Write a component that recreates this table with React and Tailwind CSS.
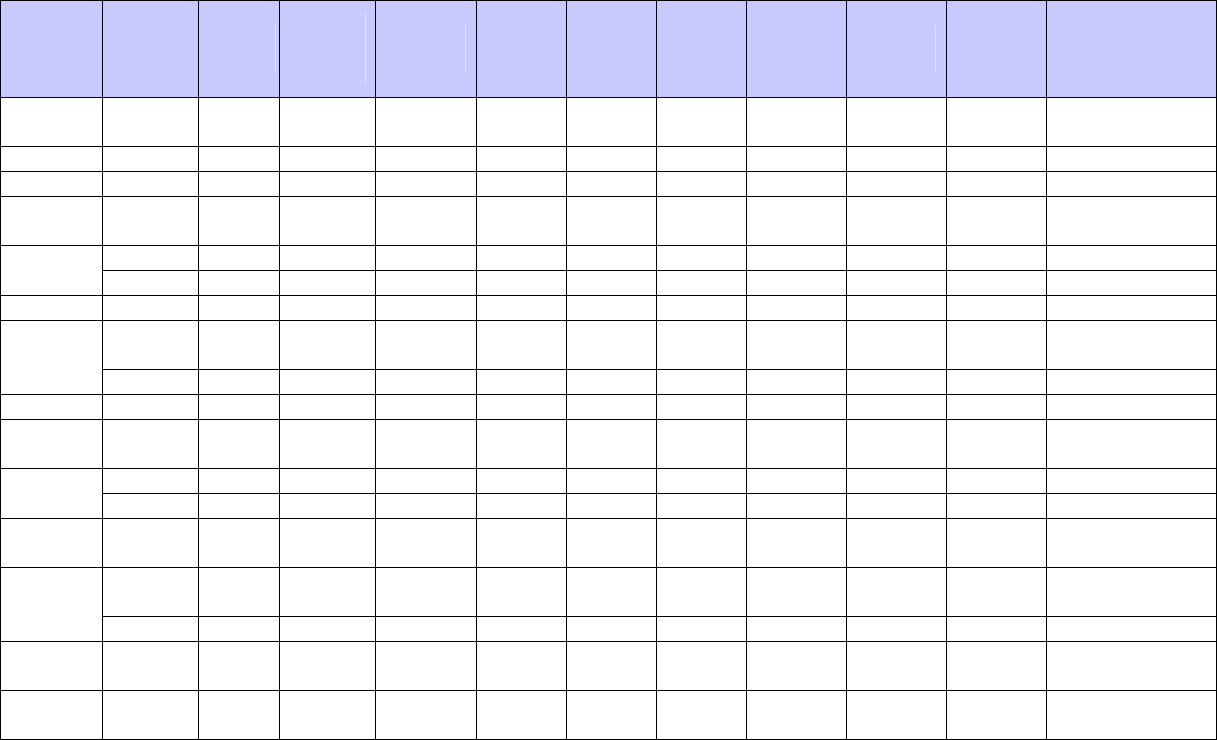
import React from "react";

const COLS = 12;

// first-column cells: span 2 rows where the first column is merged
const rows = [
    { span: 1 },
    { span: 1 },
    { span: 1 },
    { span: 1 },
    { span: 2 },
    { skip: true },
    { span: 1 },
    { span: 2 },
    { skip: true },
    { span: 1 },
    { span: 1 },
    { span: 2 },
    { skip: true },
    { span: 1 },
    { span: 2 },
    { skip: true },
    { span: 1 },
    { span: 1 },
];

// faint marks left in a few header cells
const marks = {
    2: "right-[3px] top-[24px] h-[48px]",
    3: "right-[9px] top-[12px] h-[71px]",
    4: "right-[10px] top-[24px] h-[48px]",
    9: "right-[10px] top-[24px] h-[48px]",
};

function App() {
    const cells = [];

    for (let c = 0; c < COLS; c++) {
        cells.push(
            <div key={"h" + c} className="relative bg-[#c9c9ff] border-r border-b border-black">
                {marks[c] && <div className={"absolute w-px bg-[#e4e4ff] " + marks[c]}></div>}
            </div>
        );
    }

    rows.forEach((row, r) => {
        for (let c = 0; c < COLS; c++) {
            if (c === 0 && row.skip) continue;
            const span = c === 0 && row.span === 2;
            cells.push(
                <div
                    key={r + "-" + c}
                    className={"bg-white border-r border-b border-black" + (span ? " row-span-2" : "")}
                ></div>
            );
        }
    });

    return (
        <div className="w-[1217px] h-[740px] bg-white">
            <div className="grid grid-cols-[102px_96px_81px_96px_101px_90px_90px_90px_100px_100px_100px_170px] grid-rows-[97px_49px_25px_25px_49px_25px_25px_25px_49px_25px_25px_49px_25px_25px_49px_49px_25px_49px_49px] border-t border-l border-black w-[1217px]">
                {cells}
            </div>
        </div>
    );
}

export default App;
